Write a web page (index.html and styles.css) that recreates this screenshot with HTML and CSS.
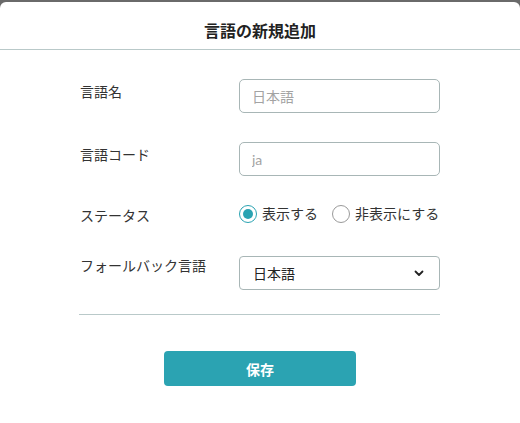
FILE: index.html
```html
<!DOCTYPE html>
<html lang="ja">
<head>
<meta charset="utf-8">
<link rel="stylesheet" href="styles.css">
</head>
<body>
<div class="modal">
  <div class="modal-header">言語の新規追加</div>
  <div class="modal-body">
    <div class="row row-name">
      <div class="label">言語名</div>
      <input class="field" type="text" placeholder="日本語">
    </div>
    <div class="row row-code">
      <div class="label">言語コード</div>
      <input class="field" type="text" placeholder="ja">
    </div>
    <div class="row row-status">
      <div class="label label-mid">ステータス</div>
      <div class="radios">
        <label class="radio"><span class="dot checked"></span>表示する</label>
        <label class="radio"><span class="dot"></span>非表示にする</label>
      </div>
    </div>
    <div class="row row-fallback">
      <div class="label label-fb">フォールバック言語</div>
      <div class="select">
        <span>日本語</span>
        <svg class="chev" width="10" height="7" viewBox="0 0 10 7"><path d="M1.5 1.5 L5 5 L8.5 1.5" fill="none" stroke="#222" stroke-width="1.8" stroke-linecap="round" stroke-linejoin="round"/></svg>
      </div>
    </div>
    <div class="divider"></div>
    <div class="actions">
      <button class="btn">保存</button>
    </div>
  </div>
</div>
</body>
</html>
```

FILE: styles.css
```css
* { box-sizing: border-box; }
html, body { margin: 0; padding: 0; }
body {
  background: #6a6a6a;
  font-family: "Lato", "Noto Sans CJK JP", sans-serif;
  color: #333;
  width: 520px;
  height: 423px;
  overflow: hidden;
}
.modal {
  margin-top: 2px;
  background: #fff;
  border-radius: 6px 6px 0 0;
  height: 421px;
}
.modal-header {
  padding: 20px 0 10px;
  line-height: 17px;
  text-align: center;
  font-size: 16px;
  font-weight: 700;
  color: #222;
  border-bottom: 1px solid #b9c9c9;
}
.modal-body {
  padding: 29px 80px 0 80px;
}
.row {
  display: flex;
  align-items: flex-start;
}
.row-code { margin-top: 29px; }
.row-status { margin-top: 29px; align-items: center; height: 18px; }
.row-fallback { margin-top: 33px; }
.label {
  width: 159px;
  font-size: 14px;
  line-height: 20px;
  padding-top: 3px;
  color: #333;
}
.label-mid { padding-top: 0; margin-top: 3px; }
.label-fb { padding-top: 0; }
.field {
  width: 201px;
  height: 34px;
  border: 1px solid #a8b6b6;
  border-radius: 5px;
  padding: 0 12px;
  font-family: inherit;
  font-size: 14px;
  color: #333;
  outline: none;
}
.field::placeholder { color: #a3a3a3; }
.radios {
  display: flex;
  align-items: center;
  gap: 14px;
}
.radio {
  display: flex;
  align-items: center;
  gap: 5px;
  font-size: 14px;
  line-height: 18px;
  color: #333;
}
.dot {
  width: 18px;
  height: 18px;
  border-radius: 50%;
  border: 1px solid #9a9a9a;
  display: flex;
  align-items: center;
  justify-content: center;
}
.dot.checked { border: 1.5px solid #2aa3b2; }
.dot.checked::after {
  content: "";
  width: 10px;
  height: 10px;
  border-radius: 50%;
  background: #2aa3b2;
}
.select {
  width: 201px;
  height: 34px;
  border: 1px solid #a8b6b6;
  border-radius: 4px;
  padding: 0 15px 0 13px;
  display: flex;
  align-items: center;
  justify-content: space-between;
  font-size: 14px;
  color: #222;
}
.divider {
  margin-top: 24px;
  height: 1px;
  background: #b9c9c9;
  margin-left: -1px;
}
.actions {
  display: flex;
  justify-content: center;
  padding-top: 36px;
}
.btn {
  width: 192px;
  height: 35px;
  background: #2ba3b2;
  color: #fff;
  border: none;
  border-radius: 4px;
  font-family: inherit;
  font-size: 14px;
  font-weight: 700;
}
```
